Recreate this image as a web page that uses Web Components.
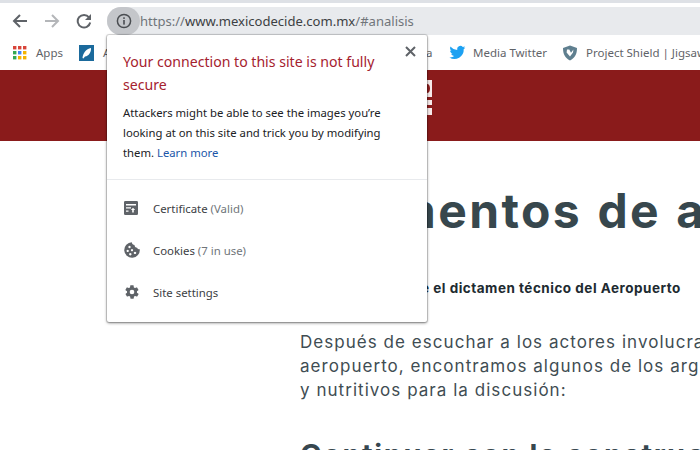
<!DOCTYPE html>
<html lang="es">
<head>
<meta charset="utf-8">
<title>mexicodecide</title>
<style>
  html, body { margin: 0; height: 100%; background: #fff; overflow: hidden; }
  body { position: relative; }
</style>
</head>
<body>
<browser-toolbar url-host="www.mexicodecide.com.mx" url-path="/#analisis"></browser-toolbar>
<bookmark-bar>
  <bookmark-item style="width:66px;gap:9px" label="Apps" icon="apps"></bookmark-item>
  <bookmark-item style="width:347px" label="A" icon="feather"></bookmark-item>
  <bookmark-item style="width:23px" label="a"></bookmark-item>
  <bookmark-item style="width:113px;gap:7px" label="Media Twitter" icon="twitter"></bookmark-item>
  <bookmark-item label="Project Shield | Jigsaw" icon="shield"></bookmark-item>
</bookmark-bar>
<site-banner></site-banner>
<article-view></article-view>
<security-popup>
  <popup-row icon="certificate">Certificate <span style="color:#70757a">(Valid)</span></popup-row>
  <popup-row icon="cookies">Cookies <span style="color:#70757a">(7 in use)</span></popup-row>
  <popup-row icon="settings">Site settings</popup-row>
</security-popup>

<script>
const ICONS = {
  apps: `<svg width="14" height="14" viewBox="0 0 14 14">
    <rect x="0" y="0" width="3.4" height="3.4" fill="#d8453a"/><rect x="5" y="0" width="3.4" height="3.4" fill="#d8453a"/><rect x="10" y="0" width="3.4" height="3.4" fill="#d8453a"/>
    <rect x="0" y="5" width="3.4" height="3.4" fill="#34a853"/><rect x="5" y="5" width="3.4" height="3.4" fill="#4285f4"/><rect x="10" y="5" width="3.4" height="3.4" fill="#f4b400"/>
    <rect x="0" y="10" width="3.4" height="3.4" fill="#34a853"/><rect x="5" y="10" width="3.4" height="3.4" fill="#f4b400"/><rect x="10" y="10" width="3.4" height="3.4" fill="#f4b400"/></svg>`,
  feather: `<svg width="16" height="16" viewBox="0 0 16 16"><rect width="15" height="16" fill="#1b6a9c"/>
    <path d="M3.5 13 C4 8 7 4 12 3 C12.3 7 10 11 6 11.5 L4.4 13.4Z" fill="#fff"/></svg>`,
  twitter: `<svg width="17" height="17" viewBox="0 0 24 24"><path fill="#1da1f2" d="M23 4.9c-.8.4-1.7.6-2.600.7.900-.6 1.700-1.400 2-2.500-.9.500-1.900.9-2.900 1.100A4.600 4.600 0 0 0 11.600 8.400C7.800 8.200 4.400 6.400 2.100 3.600c-1.200 2.100-.6 4.800 1.400 6.100-.7 0-1.400-.2-2-.6 0 2.200 1.600 4.100 3.700 4.600-.7.200-1.400.2-2.100.1.600 1.800 2.300 3.200 4.300 3.200A9.300 9.300 0 0 1 .6 18.900a13.100 13.100 0 0 0 20.200-11.700c.9-.6 1.700-1.400 2.200-2.300z"/></svg>`,
  shield: `<svg width="16" height="16" viewBox="0 0 16 16"><path fill-rule="evenodd" fill="#5f7f8f" d="M8 .5 15 3c0 6-2 10-7 12.500C3 13 1 9 1 3ZM5 4.500 4.600 7.500 8 11.500l3-4 .4-3-2.400 3.200L7.300 4.500Z"/></svg>`,
  certificate: `<svg width="14" height="14" viewBox="0 0 14 14"><path fill="#5f6368" fill-rule="evenodd" d="M1.300 0H12.700A1.300 1.300 0 0 1 14 1.300V12.700A1.300 1.300 0 0 1 12.700 14H1.300A1.300 1.300 0 0 1 0 12.700V1.300A1.300 1.300 0 0 1 1.300 0ZM2 3V4.500H12V3ZM2 6.300V7.600H7V6.300ZM2 9.500V10.800H4.500V9.500ZM9 6.800 6.900 9H8.200V11.500H9.800V9H11.100Z"/></svg>`,
  cookies: `<svg width="16" height="16" viewBox="0 0 16 16"><path fill="#5f6368" fill-rule="evenodd" d="M7.800 .2C8 2 9.200 3 10.500 3c0 1.600 1.100 2.700 2.600 2.700.4 1 1.300 1.500 2.700 1.600A7.800 7.800 0 1 1 7.800 .2ZM5.500 3.800a1.200 1.200 0 1 0 .01 0ZM3.700 7.800a1.100 1.100 0 1 0 .01 0ZM8 7a1.100 1.100 0 1 0 .01 0ZM6.300 11a1.200 1.200 0 1 0 .01 0ZM11 9.700a1.200 1.200 0 1 0 .01 0Z"/></svg>`,
  settings: `<svg width="16" height="16" viewBox="0 0 24 24"><path fill="#5f6368" d="M19.400 13c.1-.3.100-.7.100-1s0-.7-.1-1l2.100-1.600c.2-.2.200-.4.100-.6l-2-3.500c-.1-.2-.4-.3-.6-.2l-2.500 1c-.5-.4-1.100-.7-1.700-1l-.4-2.600c0-.3-.2-.5-.5-.5h-4c-.3 0-.5.200-.5.500l-.4 2.600c-.6.300-1.200.6-1.700 1l-2.500-1c-.2-.1-.5 0-.6.200l-2 3.500c-.1.200-.1.500.1.600L4.600 11c-.1.300-.1.700-.1 1s0 .7.100 1l-2.100 1.600c-.2.200-.2.400-.1.600l2 3.500c.1.200.4.300.6.200l2.500-1c.5.400 1.100.7 1.700 1l.4 2.600c0 .3.200.5.500.5h4c.3 0 .5-.2.500-.5l.4-2.600c.6-.3 1.200-.6 1.700-1l2.500 1c.2.100.5 0 .6-.2l2-3.500c.1-.2.100-.5-.1-.6zM12 15.500a3.500 3.500 0 1 1 0-7 3.500 3.500 0 0 1 0 7z"/></svg>`
};

class BrowserToolbar extends HTMLElement {
  connectedCallback() {
    this.attachShadow({ mode: 'open' });
    this.shadowRoot.innerHTML = `
      <style>
        :host { display: block; height: 35px; background: #fff; border-top: 3px solid #dee1e6; box-sizing: border-box; }
        .row { display: flex; align-items: flex-start; padding-top: 4px; }
        .nav { display: flex; width: 107px; padding-left: 12px; gap: 16px; box-sizing: border-box; padding-top: 6px; }
        .nav svg { display: block; }
        .omni { flex: 1; height: 28px; background: #e8eaed; border-radius: 14px 0 0 14px; display: flex; align-items: center; }
        .chip { width: 33px; height: 28px; border-radius: 14px; background: #c4c6ca; display: flex; align-items: center; justify-content: center; }
        .url { font: 13.05px "Noto Sans", sans-serif; color: #70757a; white-space: nowrap; }
        .url b { font-weight: 400; color: #3c4043; }
      </style>
      <div class="row">
        <div class="nav">
          <svg width="16" height="16" viewBox="0 0 16 16"><path d="M15 8H2M8 2 2 8l6 6" fill="none" stroke="#5f6368" stroke-width="2"/></svg>
          <svg width="16" height="16" viewBox="0 0 16 16"><path d="M1 8h13M8 2l6 6-6 6" fill="none" stroke="#b4b6b9" stroke-width="2"/></svg>
          <svg width="16" height="16" viewBox="0 0 16 16"><path d="M13 4.300A6.300 6.300 0 1 0 14.200 9.500" fill="none" stroke="#5f6368" stroke-width="2"/><path d="M15 1v6H9z" fill="#5f6368"/></svg>
        </div>
        <div class="omni">
          <div class="chip">
            <svg width="16" height="16" viewBox="0 0 16 16"><circle cx="8" cy="8" r="6.600" fill="none" stroke="#4a4d51" stroke-width="1.500"/><rect x="7.200" y="7" width="1.600" height="4.600" fill="#4a4d51"/><rect x="7.200" y="4.300" width="1.600" height="1.600" fill="#4a4d51"/></svg>
          </div>
          <span class="url">https://<b>${this.getAttribute('url-host')}</b>${this.getAttribute('url-path')}</span>
        </div>
      </div>`;
  }
}
customElements.define('browser-toolbar', BrowserToolbar);

class BookmarkBar extends HTMLElement {
  connectedCallback() {
    this.attachShadow({ mode: 'open' });
    this.shadowRoot.innerHTML = `
      <style>
        :host { display: block; height: 35px; background: #fff; overflow: hidden; }
        .bar { display: flex; align-items: center; height: 35px; padding-left: 13px; white-space: nowrap; }
      </style>
      <div class="bar"><slot></slot></div>`;
  }
}
customElements.define('bookmark-bar', BookmarkBar);

class BookmarkItem extends HTMLElement {
  connectedCallback() {
    this.attachShadow({ mode: 'open' });
    this.shadowRoot.innerHTML = `
      <style>
        :host { display: flex; align-items: center; gap: 8px; flex: none; font: 11.500px "Noto Sans", sans-serif; color: #5f6368; }
        svg { display: block; }
      </style>
      ${ICONS[this.getAttribute('icon')] || ''}<span>${this.getAttribute('label')}</span>`;
  }
}
customElements.define('bookmark-item', BookmarkItem);

class SiteBanner extends HTMLElement {
  connectedCallback() {
    this.attachShadow({ mode: 'open' });
    this.shadowRoot.innerHTML = `
      <style>
        :host { display: block; height: 71px; background: #8a1b1b; padding: 10px 0 0 427px; box-sizing: border-box; }
        svg { display: block; }
      </style>
      <svg width="5" height="36" viewBox="0 0 5 36">
        <path fill="#f6e9e9" d="M0 0H5V17H0V13C2 13 3 11 3 8.500S2 4 0 4Z"/>
        <rect y="20" width="5" height="5" fill="#f6e9e9"/>
        <rect y="28" width="5" height="7" fill="#f6e9e9"/>
      </svg>`;
  }
}
customElements.define('site-banner', SiteBanner);

class ArticleView extends HTMLElement {
  connectedCallback() {
    this.attachShadow({ mode: 'open' });
    this.shadowRoot.innerHTML = `
      <style>
        :host { display: block; height: 309px; overflow: hidden; font-family: "Inter", "Liberation Sans", sans-serif; color: #37474f; white-space: nowrap; }
        h1 { margin: 0; padding: 35px 0 0 392px; font-size: 48px; line-height: 70px; letter-spacing: 2.4px; word-spacing: 1.500px; font-weight: 700; color: #37474d; }
        h3 { margin: 0; padding: 33px 0 0 421px; font-size: 13.500px; line-height: 18px; letter-spacing: .5px; font-weight: 700; color: #202a30; }
        p { margin: 0; padding: 33px 0 0 300px; font-size: 17px; line-height: 24px; letter-spacing: 1.04px; font-weight: 400; color: #3f4d53; }
        h2 { margin: 0; padding: 33px 0 0 300px; font-size: 29px; line-height: 40px; letter-spacing: 1.600px; font-weight: 700; }
      </style>
      <h1>mentos de análisis</h1>
      <h3>e el dictamen técnico del Aeropuerto</h3>
      <p>Después de escuchar a los actores involucrados<br>aeropuerto, encontramos algunos de los argumentos<br>y nutritivos para la discusión:</p>
      <h2>Continuar con la construcción</h2>`;
  }
}
customElements.define('article-view', ArticleView);

class SecurityPopup extends HTMLElement {
  connectedCallback() {
    this.attachShadow({ mode: 'open' });
    this.shadowRoot.innerHTML = `
      <style>
        :host { display: block; position: absolute; left: 107px; top: 35px; width: 320px; height: 287px; box-sizing: border-box; background: #fff; border-radius: 2px;
          box-shadow: 0 0 0 1px rgba(0,0,0,.12), 0 1px 3px rgba(0,0,0,.5); font-family: "Noto Sans", sans-serif; }
        .head { padding: 16px 48px 0 16px; height: 145px; box-sizing: border-box; border-bottom: 1px solid #e8eaed; position: relative; }
        h2 { margin: 0; font-size: 14.100px; line-height: 22.500px; font-weight: 400; color: #a5212e; width: 270px; }
        p { margin: 7px 0 0; font-size: 11.300px; line-height: 20px; color: #202124; width: 275px; }
        a { color: #1a56a8; text-decoration: none; }
        .close { position: absolute; right: 11px; top: 11px; display: block; }
        .rows { padding-top: 7px; }
      </style>
      <div class="head">
        <svg class="close" width="11" height="11" viewBox="0 0 11 11"><path d="M1 1l9 9M10 1l-9 9" stroke="#5f6368" stroke-width="2"/></svg>
        <h2>Your connection to this site is not fully secure</h2>
        <p>Attackers might be able to see the images you’re looking at on this site and trick you by modifying them. <a href="#">Learn more</a></p>
      </div>
      <div class="rows"><slot></slot></div>`;
  }
}
customElements.define('security-popup', SecurityPopup);

class PopupRow extends HTMLElement {
  connectedCallback() {
    this.attachShadow({ mode: 'open' });
    this.shadowRoot.innerHTML = `
      <style>
        :host { display: flex; align-items: center; height: 42px; padding-left: 17px; font-size: 11.400px; color: #3c4043; }
        .ico { width: 29px; display: flex; }
        svg { display: block; }
      </style>
      <span class="ico">${ICONS[this.getAttribute('icon')]}</span><span><slot></slot></span>`;
  }
}
customElements.define('popup-row', PopupRow);
</script>
</body>
</html>
